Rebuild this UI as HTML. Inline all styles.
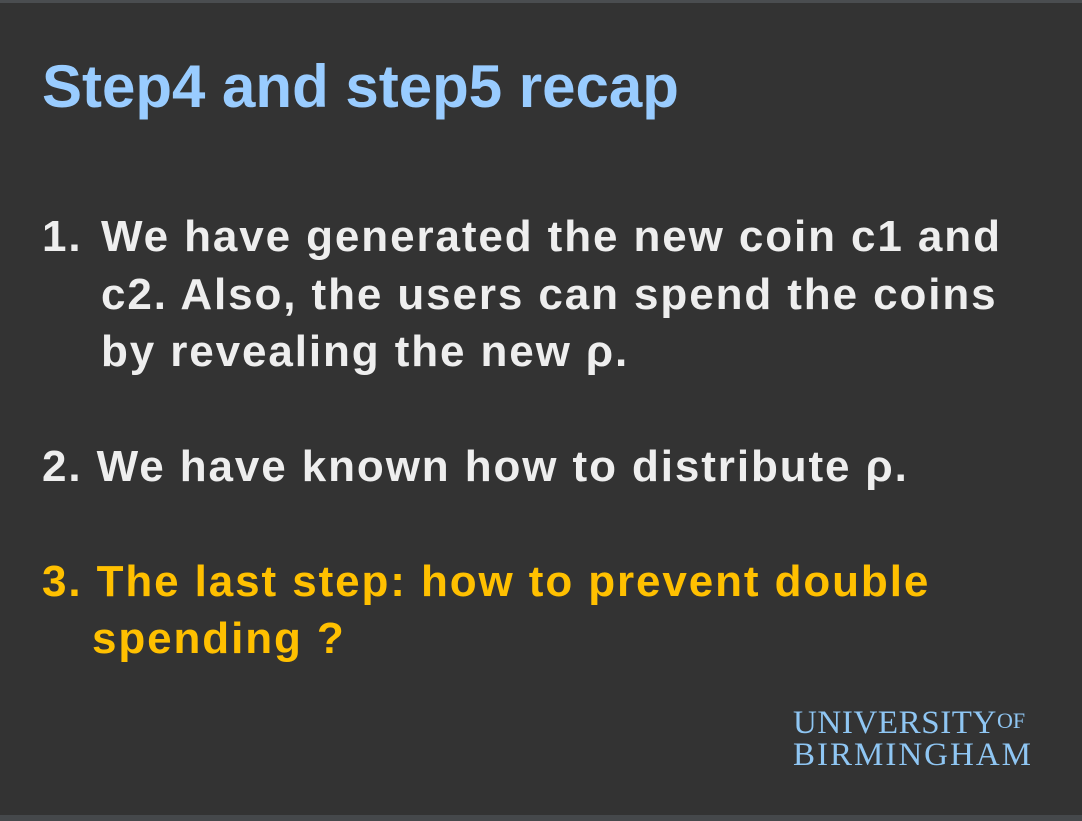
<!DOCTYPE html>
<html><head><style>
html,body{margin:0;padding:0;}
body{width:1082px;height:821px;background:#333;position:relative;overflow:hidden;font-family:"Liberation Sans",Arial,sans-serif;font-weight:bold;}
.top{position:absolute;left:0;top:0;width:1082px;height:3px;background:#4a4d50;}
.bot{position:absolute;left:0;top:815px;width:1082px;height:6px;background:#45484b;}
.t{position:absolute;white-space:nowrap;}
h1{position:absolute;left:42px;top:52px;margin:0;font-size:60px;color:#99ccff;line-height:70px;white-space:nowrap;}
.w{color:#eeeeee;font-size:44px;line-height:50px;letter-spacing:1.9px;}
.y{color:#ffc000;font-size:44px;line-height:50px;letter-spacing:1.9px;}
.logo{font-family:"Liberation Serif",serif;font-weight:normal;color:#8fc6f3;font-size:33px;line-height:32px;position:absolute;left:793px;white-space:nowrap;}
</style></head><body>
<div class="top"></div><div class="bot"></div>
<h1>Step4 and step5 recap</h1>
<div class="t w" style="left:42px;top:212px">1.</div>
<div class="t w" style="left:101px;top:212px">We have generated the new coin c1 and</div>
<div class="t w" style="left:101px;top:270px">c2. Also, the users can spend the coins</div>
<div class="t w" style="left:101px;top:327px">by revealing the new ρ.</div>
<div class="t w" style="left:42px;top:442px">2. We have known how to distribute ρ.</div>
<div class="t y" style="left:42px;top:557px">3. The last step: how to prevent double</div>
<div class="t y" style="left:92px;top:614px">spending ?</div>
<div class="logo" style="top:707px;letter-spacing:0.6px">UNIVERSITY<span style="font-size:22px;position:relative;top:-5px;letter-spacing:0">OF</span></div>
<div class="logo" style="top:739px;letter-spacing:2px">BIRMINGHAM</div>
</body></html>
